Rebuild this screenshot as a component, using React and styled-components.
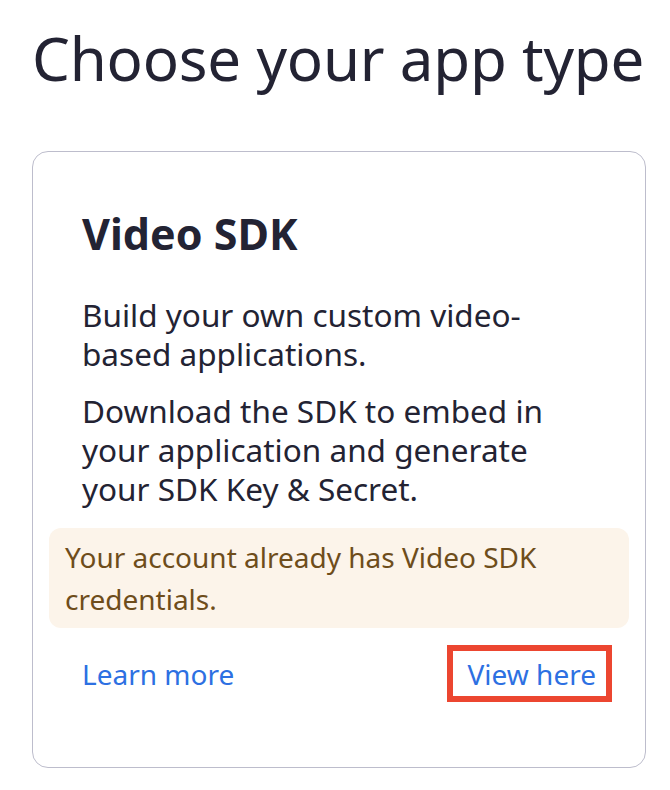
import React from "react";
import styled, { createGlobalStyle } from "styled-components";

const GlobalStyle = createGlobalStyle`
  body {
    margin: 0;
    background: #ffffff;
    font-family: "Noto Sans", "Open Sans", sans-serif;
    color: #232333;
  }
`;

function App() {
  return (
    <Page>
      <GlobalStyle />
      <Title>Choose your app type</Title>
      <Card>
        <CardHeading>Video SDK</CardHeading>
        <Body>
          <Text>Build your own custom video-based applications.</Text>
          <Text>
            Download the SDK to embed in your application and generate your SDK
            Key &amp; Secret.
          </Text>
        </Body>
        <Notice>Your account already has Video SDK credentials.</Notice>
        <Actions>
          <LinkButton href="#">Learn more</LinkButton>
          <LinkButton href="#" highlighted>
            View here
          </LinkButton>
        </Actions>
      </Card>
    </Page>
  );
}

export default App;

const Page = styled.div`
  padding: 22px 24px 0 32px;
`;

const Title = styled.h1`
  margin: 0 0 57px;
  font-size: 60px;
  line-height: 72px;
  font-weight: 400;
  letter-spacing: -0.2px;
  color: #232333;
  white-space: nowrap;
`;

const Card = styled.div`
  width: 614px;
  box-sizing: border-box;
  border: 1px solid #bdbdcc;
  border-radius: 16px;
  padding: 56px 16px 65px;
`;

const CardHeading = styled.h2`
  margin: 0 0 35px;
  padding: 0 33px;
  font-size: 43px;
  line-height: 52px;
  font-weight: 700;
  color: #232333;
`;

const Body = styled.div`
  display: flex;
  flex-direction: column;
  gap: 18px;
  padding: 0 57px 0 33px;
`;

const Text = styled.p`
  margin: 0;
  font-size: 31.5px;
  line-height: 39px;
  color: #232333;
`;

const Notice = styled.div`
  margin-top: 20px;
  padding: 8px 16px;
  border-radius: 12px;
  background: #fcf4ea;
  color: #6e4d1b;
  font-size: 28px;
  line-height: 42px;
`;

const Actions = styled.div`
  display: flex;
  justify-content: space-between;
  align-items: center;
  margin-top: 17px;
  padding: 0 17px 0 33px;
`;

const LinkButton = styled.a`
  font-size: 28px;
  line-height: 38px;
  color: #2d70e2;
  text-decoration: none;
  border: 6px solid ${(p) => (p.highlighted ? "#ec4630" : "transparent")};
  padding: 4px 10px 3px 15px;
  margin-left: ${(p) => (p.highlighted ? "0" : "-21px")};
`;
